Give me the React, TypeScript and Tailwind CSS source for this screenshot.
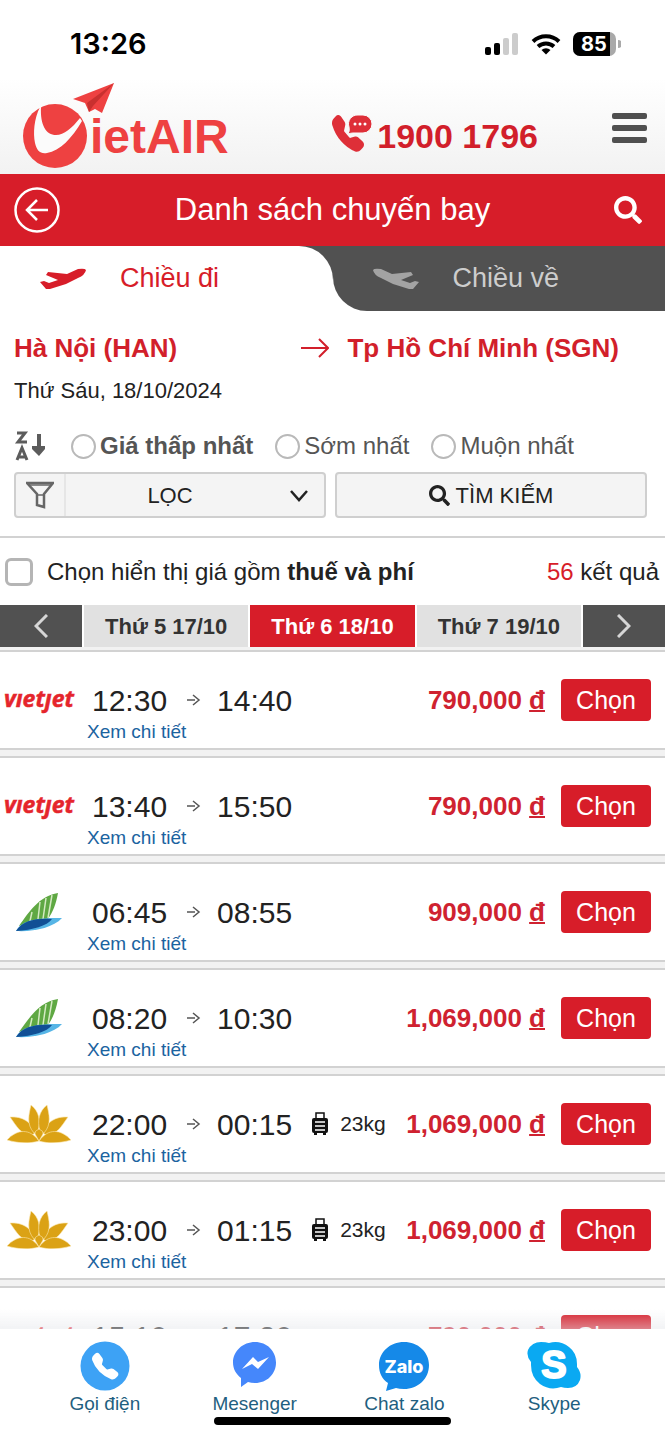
import { FaSearch } from 'react-icons/fa';

type Airline = 'vietjet' | 'bamboo' | 'vna';

const flights: { airline: Airline; from: string; to: string; price: string; bag?: string }[] = [
  { airline: 'vietjet', from: '12:30', to: '14:40', price: '790,000' },
  { airline: 'vietjet', from: '13:40', to: '15:50', price: '790,000' },
  { airline: 'bamboo', from: '06:45', to: '08:55', price: '909,000' },
  { airline: 'bamboo', from: '08:20', to: '10:30', price: '1,069,000' },
  { airline: 'vna', from: '22:00', to: '00:15', price: '1,069,000', bag: '23kg' },
  { airline: 'vna', from: '23:00', to: '01:15', price: '1,069,000', bag: '23kg' },
  { airline: 'vietjet', from: '15:10', to: '17:20', price: '790,000' },
];

const sortOptions = [
  { id: 'cheap', label: 'Giá thấp nhất', bold: true },
  { id: 'early', label: 'Sớm nhất', bold: false },
  { id: 'late', label: 'Muộn nhất', bold: false },
];

const PHONE_PATH =
  'M1.885.511a1.745 1.745 0 0 1 2.61.163L6.29 2.98c.329.423.445.974.315 1.494l-.547 2.19a.68.68 0 0 0 .178.643l2.457 2.457a.68.68 0 0 0 .644.178l2.189-.547a1.75 1.75 0 0 1 1.494.315l2.306 1.794c.829.645.905 1.87.163 2.611l-1.034 1.034c-.74.74-1.846 1.065-2.877.702a18.6 18.6 0 0 1-7.01-4.42 18.6 18.6 0 0 1-4.42-7.009c-.362-1.03-.037-2.137.703-2.877z';

const Logo = () => (
  <svg width="212" height="88" viewBox="0 0 212 88" role="img" aria-label="VietAIR">
    <circle cx="33" cy="53" r="32" fill="#ee4141" />
    <path
      d="M18 24C12 36 11 50 13 60C15 68 18 71 25 70C38 68 50 55 60 38L58 35C50 45 42 52 34 52C24 52 18 42 19 24Z"
      fill="#fbfbfb"
    />
    <path d="M51 16L92 0L80 30L73 26L67 29L63 20Z" fill="#ee4141" />
    <path d="M92 0L65 20L67 29L71 23Z" fill="#c9302f" />
    <text x="68" y="70" fontSize="48" fontWeight="700" fontFamily="Liberation Sans, Arial, sans-serif" fill="#ee4141">
      ietAIR
    </text>
  </svg>
);

const StatusBar = () => (
  <div className="flex h-20 items-center justify-between pt-2 pr-11 pl-[70px] text-black">
    <span className="font-[Inter,sans-serif] text-[29px] font-semibold">13:26</span>
    <div className="flex items-center gap-3">
      <svg width="35" height="22" viewBox="0 0 35 22">
        <rect x="1" y="14" width="6" height="8" rx="2" />
        <rect x="10" y="10" width="6" height="12" rx="2" />
        <rect x="19" y="5" width="6" height="17" rx="2" fill="#cccccc" />
        <rect x="28" y="0" width="6" height="22" rx="2" fill="#cccccc" />
      </svg>
      <svg width="30" height="22" viewBox="0 0 30 22" fill="none" stroke="#000" strokeWidth="4">
        <path d="M2 8.500A19 19 0 0 1 28 8.500" />
        <path d="M7 13.500A12 12 0 0 1 23 13.500" />
        <path d="M15 21.500L10.500 17A6.500 6.500 0 0 1 19.500 17Z" fill="#000" stroke="none" />
      </svg>
      <svg width="48" height="24" viewBox="0 0 48 24">
        <rect width="43" height="24" rx="7" fill="#a9a9a9" />
        <path d="M7 0H37V24H7A7 7 0 0 1 0 17V7A7 7 0 0 1 7 0Z" />
        <path d="M45 8A4 4 0 0 1 45 16Z" fill="#a9a9a9" />
        <text x="21" y="19" fontSize="20" fontWeight="700" textAnchor="middle" fontFamily="Inter, sans-serif" fill="#fff">
          85
        </text>
      </svg>
    </div>
  </div>
);

const Hotline = () => (
  <a href="tel:19001796" className="flex items-center gap-1 text-[34px] leading-10 font-bold text-[#d21f2b]">
    <svg width="42" height="42" viewBox="0 0 42 42" fill="#de2f38">
      <g transform="translate(1 0) scale(2 2.300)">
        <path d={PHONE_PATH} />
      </g>
      <path d="M27 0H32A9 9 0 0 1 32 18H22Q20 18 17 19Q19 16 18 12A9 9 0 0 1 27 0Z" stroke="#fafafa" strokeWidth="1" />
      <circle cx="24" cy="9" r="1.500" fill="#fff" />
      <circle cx="29" cy="9" r="1.500" fill="#fff" />
      <circle cx="34" cy="9" r="1.500" fill="#fff" />
    </svg>
    1900 1796
  </a>
);

const Plane = ({ className }: { className?: string }) => (
  <svg width="46" height="22" viewBox="0 0 46 22" fill="currentColor" className={className}>
    <path d="M0 14L4 13L9 15L18 12L6 7L8 4L27 6L38 1Q45 0 46 2Q45 7 38 10L26 16L10 21L6 21Z" />
  </svg>
);

const AirlineLogo = ({ airline }: { airline: Airline }) => {
  if (airline === 'vietjet') {
    return (
      <svg width="76" height="34" viewBox="0 0 76 34" role="img" aria-label="Vietjet">
        <text
          x="3"
          y="24"
          fontSize="23"
          fontWeight="700"
          fontStyle="italic"
          fontFamily="Open Sans, sans-serif"
          fill="#e5252c"
          stroke="#e5252c"
          strokeWidth=".5"
        >
          vıetȷet
        </text>
      </svg>
    );
  }
  if (airline === 'bamboo') {
    return (
      <svg width="48" height="40" viewBox="0 0 48 40" role="img" aria-label="Bamboo Airways">
        <path d="M4 34C14 20 24 4 43 1C41 12 38 20 33 27Z" fill="#5fa843" />
        <path d="M17 20L15 29M25 10L23 27M31 6L28 27M37 3L33 26" stroke="#d5eac3" strokeWidth="1.500" />
        <path d="M1 39C8 26 28 26 47 26C38 36 18 40 1 39Z" fill="#56b5e6" />
        <path d="M1 39C8 28 22 26 37 27C32 34 18 38 1 39Z" fill="#114f95" />
      </svg>
    );
  }
  return (
    <svg width="64" height="38" viewBox="0 0 64 38" role="img" aria-label="Vietnam Airlines" fill="#dba215" stroke="#fbe7b0" strokeWidth=".6">
      <path d="M3 12C15 11 24 17 29 27L24 31C13 28 10 22 3 12Z" />
      <path d="M61 12C49 11 40 17 35 27L40 31C51 28 54 22 61 12Z" />
      <path d="M24 0C32 6 34 16 31 26L27 28C19 19 22 9 24 0Z" />
      <path d="M40 0C32 6 30 16 33 26L37 28C45 19 42 9 40 0Z" />
      <path d="M0 35C10 24 23 23 32 36C22 39 10 38 0 35Z" />
      <path d="M64 35C54 24 41 23 32 36C42 39 54 38 64 35Z" />
      <path d="M32 24Q37 26 36 29L32 36L28 29Q27 26 32 24Z" />
    </svg>
  );
};

const Luggage = () => (
  <svg width="16" height="24" viewBox="0 0 16 24">
    <path d="M4 7V1H12V7" fill="none" stroke="#111" strokeWidth="1.500" />
    <rect y="6" width="16" height="15" rx="2" fill="#111" />
    <path d="M3 10H13M3 14H13M3 18H13" stroke="#fff" strokeWidth="1.500" />
    <path d="M2 21H5V23H2ZM11 21H14V23H11Z" fill="#111" />
  </svg>
);

const FlightRow = ({ airline, from, to, price, bag }: (typeof flights)[number]) => (
  <li className="flex h-[100px] items-start border-y-2 border-[#d2d2d2] bg-white pr-[14px]">
    <div className="flex h-24 w-[78px] shrink-0 items-center justify-center">
      <AirlineLogo airline={airline} />
    </div>
    <div className="pt-8 pl-[9px]">
      <div className="flex h-8 items-center pl-[5px] text-[30px] text-[#222]">
        <span>{from}</span>
        <svg width="14" height="12" viewBox="0 0 14 12" className="mr-4 ml-5" fill="none" stroke="#555" strokeWidth="1.500">
          <path d="M0 6H8M6 1L12 6L6 11" />
        </svg>
        <span>{to}</span>
        {bag && (
          <span className="ml-5 flex items-center gap-3 text-[21px]">
            <Luggage />
            {bag}
          </span>
        )}
      </div>
      <a href="#detail" className="block text-[19px] leading-8 text-[#1b639f]">
        Xem chi tiết
      </a>
    </div>
    <div className="ml-auto flex items-center gap-4 pt-[27px]">
      <span className="text-[26px] font-bold text-[#cf2230]">
        {price} <u className="decoration-2">đ</u>
      </span>
      <button type="button" className="h-[42px] w-[90px] rounded bg-[#d71d29] text-[25px] leading-10 text-white">
        Chọn
      </button>
    </div>
  </li>
);

const BottomNav = () => (
  <div className="fixed inset-x-0 bottom-0">
    <div className="h-5 bg-linear-to-b from-white/0 to-gray-200/50" />
    <nav className="h-[111px] bg-white">
      <div className="grid grid-cols-4 pt-3 pr-9 pl-[30px] text-[19px] leading-[26px] text-[#1f5f80]">
        <a href="tel:19001796" className="flex flex-col items-center">
          <svg width="50" height="50" viewBox="0 0 50 50">
            <circle cx="25" cy="25" r="24.500" fill="#3da2f5" />
            <g transform="translate(12 12) scale(1.650)" fill="#fff">
              <path d={PHONE_PATH} />
            </g>
          </svg>
          Gọi điện
        </a>
        <a href="#messenger" className="flex flex-col items-center">
          <svg width="50" height="50" viewBox="0 0 50 50">
            <path d="M25 1C37 1 46 10 46 21.500C46 33 37 42 25 42Q21 42 18 41L11 46V37C6 33 3 28 3 21.500C3 10 13 1 25 1Z" fill="#4587fb" />
            <path d="M12 28L23 16L28 21L39 16L28 28L22 23Z" fill="#fff" />
          </svg>
          Mesenger
        </a>
        <a href="#zalo" className="flex flex-col items-center">
          <svg width="52" height="50" viewBox="0 0 52 50">
            <path d="M26 1C40 1 51 11 51 24C51 38 40 48 26 48Q21 48 18 47L8 50L10 42C4 38 1 32 1 24C1 11 12 1 26 1Z" fill="#1589e8" />
            <text x="26" y="32" fontSize="18" fontWeight="800" textAnchor="middle" fontFamily="Inter, sans-serif" fill="#fff">
              Zalo
            </text>
          </svg>
          Chat zalo
        </a>
        <a href="#skype" className="flex flex-col items-center">
          <svg width="56" height="50" viewBox="0 0 56 50">
            <path
              d="M15 1Q20 1 23 2Q34 -1 43 6Q51 12 51 23V26Q56 32 54 39Q51 47 42 47Q38 47 35 46Q24 50 14 43Q5 36 5 24Q5 22 5 21Q0 15 2 9Q6 1 15 1Z"
              fill="#0aa9f2"
            />
            <text
              x="28"
              y="37"
              fontSize="38"
              fontWeight="700"
              textAnchor="middle"
              fontFamily="Liberation Sans, Arial, sans-serif"
              fill="#fff"
              stroke="#fff"
              strokeWidth="2"
              strokeLinejoin="round"
            >
              S
            </text>
          </svg>
          Skype
        </a>
      </div>
      <div className="mx-auto h-2 w-[237px] rounded-full bg-black" />
    </nav>
  </div>
);

const App = () => {
  return (
    <div className="min-h-screen bg-[#f2f2f2] font-['Liberation_Sans',Arial,sans-serif] text-[#222]">
      <header className="bg-linear-to-b from-white from-45% to-[#f2f2f2]">
        <StatusBar />
        <div className="flex h-[94px] items-start pt-[3px] pr-[18px] pl-[22px]">
          <Logo />
          <div className="mt-8 mr-[74px] ml-auto">
            <Hotline />
          </div>
          <button type="button" aria-label="Menu" className="mt-[30px] flex flex-col gap-[6px]">
            <span className="h-[6px] w-[35px] rounded-xs bg-[#4f4f4f]" />
            <span className="h-[6px] w-[35px] rounded-xs bg-[#4f4f4f]" />
            <span className="h-[6px] w-[35px] rounded-xs bg-[#4f4f4f]" />
          </button>
        </div>
      </header>

      <div className="flex h-18 items-center justify-between bg-[#d71d29] px-[14px] text-white">
        <button type="button" aria-label="Quay lại">
          <svg width="46" height="46" viewBox="0 0 46 46" fill="none" stroke="#fff" strokeWidth="2.500">
            <circle cx="23" cy="23" r="21.500" />
            <path d="M34 23H14M23 13L13 23L23 33" />
          </svg>
        </button>
        <h1 className="text-[31px]">Danh sách chuyến bay</h1>
        <button type="button" aria-label="Tìm" className="flex w-[46px] justify-center text-[28px]">
          <FaSearch />
        </button>
      </div>

      <div className="grid h-[65px] grid-cols-2 text-[27px]">
        <div className="bg-[#515151]">
          <button type="button" className="flex h-full w-full items-center gap-[34px] rounded-tr-[34px] bg-white pl-10 text-[#d71d29]">
            <Plane />
            Chiều đi
          </button>
        </div>
        <div className="bg-white">
          <button type="button" className="flex h-full w-full items-center gap-[34px] rounded-bl-[34px] bg-[#515151] pl-10 text-[#cdcdcd]">
            <Plane className="-scale-x-100 text-[#a3a3a3]" />
            Chiều về
          </button>
        </div>
      </div>

      <section className="border-b-2 border-[#d2d2d2] bg-white px-[14px] pt-[22px] pb-[18px]">
        <div className="flex h-[30px] items-center text-[26px] font-bold text-[#d21f2b]">
          <span className="grow">Hà Nội (HAN)</span>
          <svg width="28" height="22" viewBox="0 0 28 22" className="mr-[18px]" fill="none" stroke="#d21f2b" strokeWidth="2">
            <path d="M0 11H27M18 2L27 11L18 20" />
          </svg>
          <span className="mr-8">Tp Hồ Chí Minh (SGN)</span>
        </div>
        <p className="mt-[14px] text-[22px] leading-7">Thứ Sáu, 18/10/2024</p>

        <div className="mt-[26px] flex h-[30px] items-center text-[24px] text-[#555]">
          <svg width="32" height="32" viewBox="0 0 32 32" className="mr-[25px]">
            <g fill="none" stroke="#5c5c5c" strokeWidth="3">
              <path d="M3 3H11L4 12H13" />
              <path d="M3 30L8 18L13 30M5 27H12" />
            </g>
            <path d="M23 4H27V16H31V19L25 26L18 19V16H23Z" fill="#5c5c5c" />
          </svg>
          {sortOptions.map((option) => (
            <label key={option.id} className="mr-[22px] flex items-center gap-1 whitespace-nowrap">
              <input
                type="radio"
                name="sort"
                value={option.id}
                className="size-[25px] appearance-none rounded-full border-2 border-[#b9b9b9] bg-white checked:bg-gray-500"
              />
              <span className={option.bold ? 'font-bold' : ''}>{option.label}</span>
            </label>
          ))}
        </div>

        <div className="mt-[11px] mr-1 grid h-[46px] grid-cols-2 gap-[9px] text-[22px]">
          <div className="flex rounded border-2 border-[#cfcfcf] bg-[#f4f4f4]">
            <span className="flex w-[50px] shrink-0 items-center justify-center border-r-2 border-[#e6e6e6]">
              <svg width="28" height="28" viewBox="0 0 28 28" fill="none" stroke="#666" strokeWidth="2.500">
                <path d="M1 2H27L18 13V26L11 24V13Z" />
                <path d="M2 4H26M11 14H18" strokeWidth="1.500" />
              </svg>
            </span>
            <div className="relative grow">
              <select aria-label="Lọc" className="h-full w-full appearance-none pr-[50px] [text-align-last:center]">
                <option>LỌC</option>
              </select>
              <svg
                width="18"
                height="12"
                viewBox="0 0 18 12"
                className="pointer-events-none absolute top-4 right-4"
                fill="none"
                stroke="#222"
                strokeWidth="2.500"
              >
                <path d="M1 1L9 10L17 1" />
              </svg>
            </div>
          </div>
          <button type="button" className="flex items-center justify-center gap-[6px] rounded border-2 border-[#cfcfcf] bg-[#f4f4f4]">
            <FaSearch className="text-[21px]" />
            TÌM KIẾM
          </button>
        </div>
      </section>

      <section className="bg-white">
        <div className="flex h-[67px] items-center justify-between pr-[6px] pl-[5px] text-[24px]">
          <label className="flex items-center gap-[14px]">
            <input
              type="checkbox"
              className="size-7 appearance-none rounded-md border-3 border-[#b5b5b5] bg-white checked:bg-gray-500"
            />
            <span>
              Chọn hiển thị giá gồm <b>thuế và phí</b>
            </span>
          </label>
          <span>
            <span className="text-[#d71d29]">56</span> kết quả
          </span>
        </div>
        <div className="grid h-[42px] grid-cols-[82px_1fr_1fr_1fr_82px] gap-[2px] text-[22px] font-bold text-[#333]">
          <button type="button" aria-label="Ngày trước" className="flex items-center justify-center bg-[#515151]">
            <svg width="14" height="24" viewBox="0 0 14 24" fill="none" stroke="#d6d6d6" strokeWidth="3">
              <path d="M13 1L2 12L13 23" />
            </svg>
          </button>
          <button type="button" className="bg-[#e1e1e1]">Thứ 5 17/10</button>
          <button type="button" className="bg-[#d71d29] text-white">Thứ 6 18/10</button>
          <button type="button" className="bg-[#e1e1e1]">Thứ 7 19/10</button>
          <button type="button" aria-label="Ngày sau" className="flex items-center justify-center bg-[#515151]">
            <svg width="14" height="24" viewBox="0 0 14 24" fill="none" stroke="#d6d6d6" strokeWidth="3">
              <path d="M1 1L12 12L1 23" />
            </svg>
          </button>
        </div>
      </section>

      <ul className="flex flex-col gap-[6px] pt-[3px]">
        {flights.map((flight) => (
          <FlightRow key={flight.from} {...flight} />
        ))}
      </ul>

      <BottomNav />
    </div>
  );
};
export default App;
